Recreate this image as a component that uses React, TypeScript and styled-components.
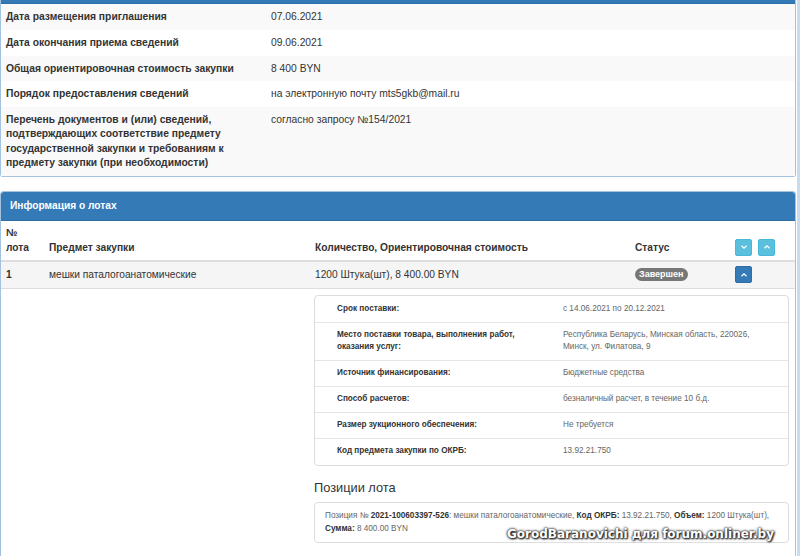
import React from 'react';
import styled, { createGlobalStyle } from 'styled-components';

const GlobalStyle = createGlobalStyle`
  html, body {
    margin: 0;
    padding: 0;
    background: #ffffff;
  }
  body {
    font-family: "Liberation Sans", Arial, sans-serif;
    color: #333333;
  }
  * {
    box-sizing: border-box;
  }
`;

const purchaseRows = [
  { label: 'Дата размещения приглашения', value: '07.06.2021' },
  { label: 'Дата окончания приема сведений', value: '09.06.2021' },
  { label: 'Общая ориентировочная стоимость закупки', value: '8 400 BYN' },
  { label: 'Порядок предоставления сведений', value: 'на электронную почту mts5gkb@mail.ru' },
  {
    label:
      'Перечень документов и (или) сведений, подтверждающих соответствие предмету государственной закупки и требованиям к предмету закупки (при необходимости)',
    value: 'согласно запросу №154/2021',
  },
];

const lotDetails = [
  { label: 'Срок поставки:', value: 'с 14.06.2021 по 20.12.2021' },
  {
    label: 'Место поставки товара, выполнения работ, оказания услуг:',
    value: 'Республика Беларусь, Минская область, 220026, Минск, ул. Филатова, 9',
  },
  { label: 'Источник финансирования:', value: 'Бюджетные средства' },
  { label: 'Способ расчетов:', value: 'безналичный расчет, в течение 10 б.д.' },
  { label: 'Размер зукционного обеспечения:', value: 'Не требуется' },
  { label: 'Код предмета закупки по ОКРБ:', value: '13.92.21.750' },
];

function Chevron({ down }: { down?: boolean }) {
  return (
    <svg width="8" height="8" viewBox="0 0 8 8">
      <path
        d={down ? 'M1.5 2.8 L4 5.2 L6.5 2.8' : 'M1.5 5.2 L4 2.8 L6.5 5.2'}
        fill="none"
        stroke="#ffffff"
        strokeWidth="1.3"
      />
    </svg>
  );
}

export default function App() {
  return (
    <Page>
      <GlobalStyle />
      <Content>
        <Panel>
          <CutHeading />
          <InfoTable>
            <tbody>
              {purchaseRows.map((row, i) => (
                <InfoRow key={row.label} $striped={i % 2 === 0}>
                  <InfoLabel>{row.label}</InfoLabel>
                  <InfoValue>{row.value}</InfoValue>
                </InfoRow>
              ))}
            </tbody>
          </InfoTable>
        </Panel>

        <LotsPanel>
          <PanelHeading>Информация о лотах</PanelHeading>
          <LotHead>
            <HeadCell>
              №<br />
              лота
            </HeadCell>
            <HeadCell>Предмет закупки</HeadCell>
            <HeadCell>Количество, Ориентировочная стоимость</HeadCell>
            <HeadCell>Статус</HeadCell>
            <ButtonCell>
              <ToggleButton $tone="info">
                <Chevron down />
              </ToggleButton>
              <ToggleButton $tone="info">
                <Chevron />
              </ToggleButton>
            </ButtonCell>
          </LotHead>

          <LotRow>
            <LotCell>
              <b>1</b>
            </LotCell>
            <LotCell>мешки паталогоанатомические</LotCell>
            <LotCell>1200 Штука(шт), 8 400.00 BYN</LotCell>
            <LotCell>
              <Badge>Завершен</Badge>
            </LotCell>
            <ButtonCell>
              <ToggleButton $tone="primary">
                <Chevron />
              </ToggleButton>
            </ButtonCell>
          </LotRow>

          <DetailRow>
            <DetailBody>
              <DetailPanel>
                {lotDetails.map((d) => (
                  <DetailItem key={d.label}>
                    <DetailLabel>{d.label}</DetailLabel>
                    <DetailValue>{d.value}</DetailValue>
                  </DetailItem>
                ))}
              </DetailPanel>

              <SectionTitle>Позиции лота</SectionTitle>
              <PositionPanel>
                Позиция № <strong>2021-100603397-526</strong>: мешки паталогоанатомические,{' '}
                <strong>Код ОКРБ:</strong> 13.92.21.750, <strong>Объем:</strong> 1200 Штука(шт),{' '}
                <strong>Сумма:</strong> 8 400.00 BYN
              </PositionPanel>
            </DetailBody>
          </DetailRow>
        </LotsPanel>
      </Content>
      <Watermark>GorodBaranovichi для forum.onliner.by</Watermark>
    </Page>
  );
}

const Page = styled.div`
  position: relative;
  width: 800px;
  height: 556px;
  overflow: hidden;
  border-right: 3px solid #c9dcee;
`;

const Content = styled.div`
  width: 796px;
  display: flex;
  flex-direction: column;
  gap: 14px;
`;

const Panel = styled.div`
  border: 1px solid #a3c2df;
  border-top: none;
  border-radius: 0 0 3px 3px;
  background: #ffffff;
`;

const CutHeading = styled.div`
  height: 4px;
  background: #337ab7;
  border-bottom: 1px solid #2e6da4;
`;

const InfoTable = styled.table`
  width: 100%;
  border-collapse: collapse;
  font-size: 10.3px;
  line-height: 14.3px;
`;

const InfoRow = styled.tr<{ $striped: boolean }>`
  background: ${(p) => (p.$striped ? '#f9f9f9' : '#ffffff')};
  & + & td {
    border-top: 1px solid #dddddd;
  }
`;

const InfoLabel = styled.td`
  width: 265px;
  padding: 6px 10px 5.5px 5px;
  font-weight: bold;
  vertical-align: top;
`;

const InfoValue = styled.td`
  padding: 6px 5px 5.5px;
  vertical-align: top;
`;

const LotsPanel = styled.div`
  border: 1px solid #a3c2df;
  border-bottom: none;
  border-radius: 4px 4px 0 0;
  overflow: hidden;
  background: #ffffff;
  font-size: 10.2px;
`;

const PanelHeading = styled.div`
  height: 29px;
  padding: 0 9px;
  display: flex;
  align-items: center;
  background: #337ab7;
  border-bottom: 1px solid #2e6da4;
  color: #ffffff;
  font-weight: bold;
`;

const lotColumns = '43px 266px 320px 100px 1fr';

const LotHead = styled.div`
  display: grid;
  grid-template-columns: ${lotColumns};
  align-items: end;
  border-bottom: 2px solid #dddddd;
  line-height: 15px;
`;

const HeadCell = styled.div`
  padding: 4px 5px 5px;
  font-weight: bold;
`;

const ButtonCell = styled.div`
  display: flex;
  gap: 6px;
  padding: 4px 5px;
`;

const ToggleButton = styled.div<{ $tone: 'info' | 'primary' }>`
  width: 17px;
  height: 17px;
  border-radius: 2px;
  display: flex;
  align-items: center;
  justify-content: center;
  background: ${(p) => (p.$tone === 'info' ? '#5bc0de' : '#337ab7')};
  border: 1px solid ${(p) => (p.$tone === 'info' ? '#46b8da' : '#2e6da4')};
`;

const LotRow = styled.div`
  display: grid;
  grid-template-columns: ${lotColumns};
  align-items: center;
  height: 27px;
  background: #f5f5f5;
  border-bottom: 1px solid #dddddd;
`;

const LotCell = styled.div`
  padding: 0 5px;
`;

const Badge = styled.span`
  display: inline-block;
  padding: 1px 4px;
  border-radius: 8px;
  background: #777777;
  color: #ffffff;
  font-size: 9px;
  font-weight: bold;
  line-height: 11px;
`;

const DetailRow = styled.div`
  display: grid;
  grid-template-columns: 313px 1fr;
  padding: 6px 6px 20px 0;
`;

const DetailBody = styled.div`
  grid-column: 2;
  display: flex;
  flex-direction: column;
`;

const DetailPanel = styled.div`
  border: 1px solid #dddddd;
  border-radius: 4px;
  padding: 1px 0;
`;

const DetailItem = styled.div`
  display: grid;
  grid-template-columns: 248px 1fr;
  padding: 6.5px 20px 6.5px 0;
  font-size: 8.2px;
  line-height: 12px;
  & + & {
    border-top: 1px solid #e5e5e5;
  }
`;

const DetailLabel = styled.div`
  padding: 0 20px 0 22px;
  font-weight: bold;
  color: #333333;
`;

const DetailValue = styled.div`
  color: #666666;
`;

const SectionTitle = styled.div`
  margin: 13px 0 6px;
  font-size: 12.8px;
  line-height: 17px;
  color: #333333;
`;

const PositionPanel = styled.div`
  border: 1px solid #dddddd;
  border-radius: 4px;
  padding: 6px 8px 7px 10px;
  font-size: 8.2px;
  line-height: 13px;
  color: #666666;
  strong {
    color: #333333;
  }
`;

const Watermark = styled.div`
  position: absolute;
  right: 23px;
  bottom: 15px;
  font-family: "DejaVu Sans", Verdana, sans-serif;
  font-weight: bold;
  font-size: 12px;
  color: #ffffff;
  text-shadow: 0 0 2px #222, 0 0 3px #222, 1px 1px 2px #000;
`;
